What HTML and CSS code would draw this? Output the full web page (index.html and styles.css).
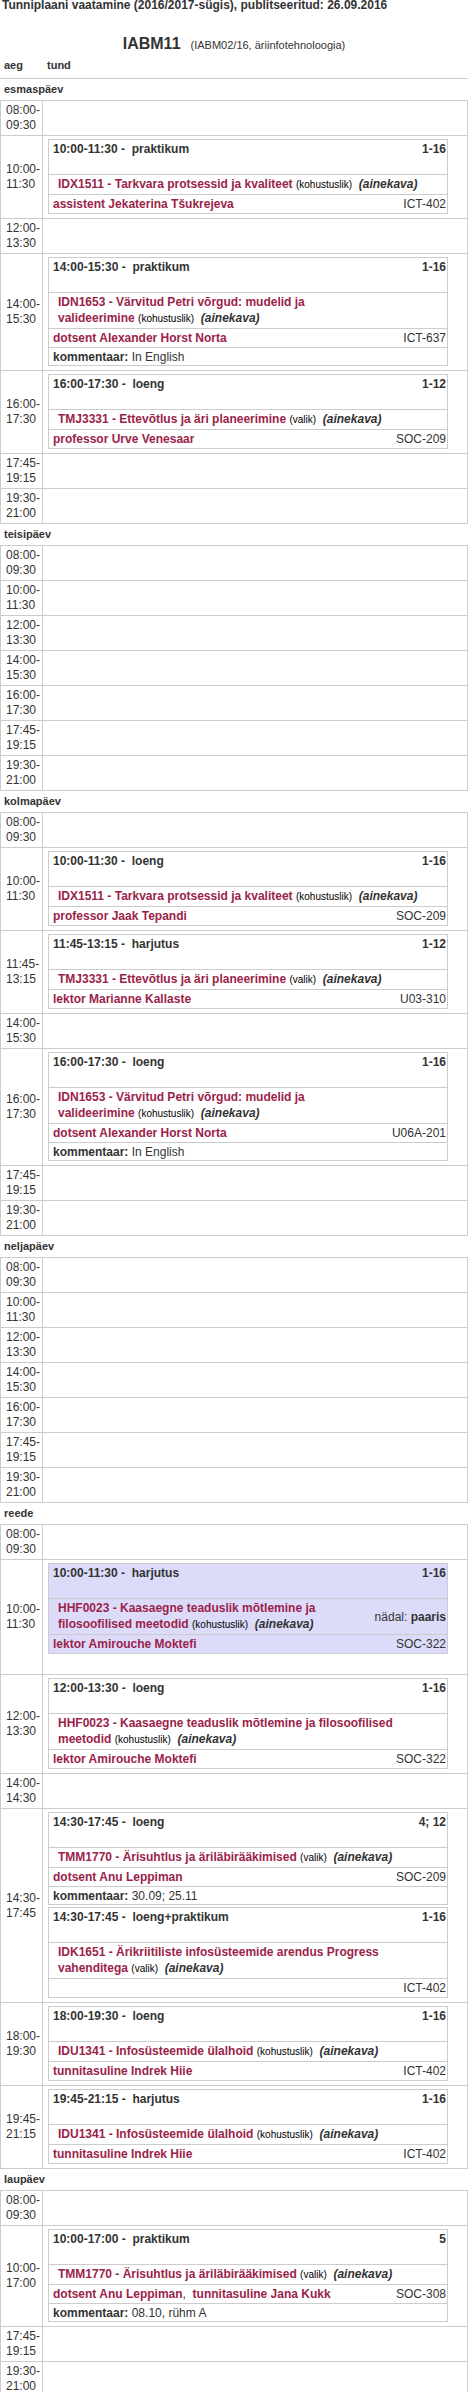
FILE: index.html
```html
<!DOCTYPE html>
<html lang="et">
<head>
<meta charset="utf-8">
<title>Tunniplaan IABM11</title>
<link rel="stylesheet" href="styles.css">
</head>
<body>
<h1 class="page-title">Tunniplaani vaatamine (2016/2017-sügis), publitseeritud: 26.09.2016</h1>
<h2 class="group"><span class="group-code">IABM11</span><span class="group-sub">(IABM02/16, äriinfotehnoloogia)</span></h2>
<div class="thead"><span class="th-time">aeg</span><span>tund</span></div>

<h3 class="day-name">esmaspäev</h3>
<div class="day">
  <div class="slot"><div class="time"><span>08:00-<br>09:30</span></div><div class="lessons"></div></div>
  <div class="slot"><div class="time"><span>10:00-<br>11:30</span></div><div class="lessons">
    <div class="card">
      <div class="row head"><span>10:00-11:30 -&nbsp; praktikum</span><span>1-16</span></div>
      <div class="row course"><div class="cwrap"><span class="cname">IDX1511 - Tarkvara protsessid ja <span class="tail">kvaliteet&nbsp;<span class="kind">(kohustuslik)</span>&nbsp;&nbsp;<span class="plan">(ainekava)</span></span></span></div></div>
      <div class="row teacher"><span class="person">assistent Jekaterina Tšukrejeva</span><span class="room">ICT-402</span></div>
    </div>
  </div></div>
  <div class="slot"><div class="time"><span>12:00-<br>13:30</span></div><div class="lessons"></div></div>
  <div class="slot"><div class="time"><span>14:00-<br>15:30</span></div><div class="lessons">
    <div class="card">
      <div class="row head"><span>14:00-15:30 -&nbsp; praktikum</span><span>1-16</span></div>
      <div class="row course"><div class="cwrap"><span class="cname">IDN1653 - Värvitud Petri võrgud: mudelid ja <span class="tail">valideerimine&nbsp;<span class="kind">(kohustuslik)</span>&nbsp;&nbsp;<span class="plan">(ainekava)</span></span></span></div></div>
      <div class="row teacher"><span class="person">dotsent Alexander Horst Norta</span><span class="room">ICT-637</span></div>
      <div class="row comment"><span><b>kommentaar:</b> In English</span></div>
    </div>
  </div></div>
  <div class="slot"><div class="time"><span>16:00-<br>17:30</span></div><div class="lessons">
    <div class="card">
      <div class="row head"><span>16:00-17:30 -&nbsp; loeng</span><span>1-12</span></div>
      <div class="row course"><div class="cwrap"><span class="cname">TMJ3331 - Ettevõtlus ja äri <span class="tail">planeerimine&nbsp;<span class="kind">(valik)</span>&nbsp;&nbsp;<span class="plan">(ainekava)</span></span></span></div></div>
      <div class="row teacher"><span class="person">professor Urve Venesaar</span><span class="room">SOC-209</span></div>
    </div>
  </div></div>
  <div class="slot"><div class="time"><span>17:45-<br>19:15</span></div><div class="lessons"></div></div>
  <div class="slot"><div class="time"><span>19:30-<br>21:00</span></div><div class="lessons"></div></div>
</div>

<h3 class="day-name">teisipäev</h3>
<div class="day">
  <div class="slot"><div class="time"><span>08:00-<br>09:30</span></div><div class="lessons"></div></div>
  <div class="slot"><div class="time"><span>10:00-<br>11:30</span></div><div class="lessons"></div></div>
  <div class="slot"><div class="time"><span>12:00-<br>13:30</span></div><div class="lessons"></div></div>
  <div class="slot"><div class="time"><span>14:00-<br>15:30</span></div><div class="lessons"></div></div>
  <div class="slot"><div class="time"><span>16:00-<br>17:30</span></div><div class="lessons"></div></div>
  <div class="slot"><div class="time"><span>17:45-<br>19:15</span></div><div class="lessons"></div></div>
  <div class="slot"><div class="time"><span>19:30-<br>21:00</span></div><div class="lessons"></div></div>
</div>

<h3 class="day-name">kolmapäev</h3>
<div class="day">
  <div class="slot"><div class="time"><span>08:00-<br>09:30</span></div><div class="lessons"></div></div>
  <div class="slot"><div class="time"><span>10:00-<br>11:30</span></div><div class="lessons">
    <div class="card">
      <div class="row head"><span>10:00-11:30 -&nbsp; loeng</span><span>1-16</span></div>
      <div class="row course"><div class="cwrap"><span class="cname">IDX1511 - Tarkvara protsessid ja <span class="tail">kvaliteet&nbsp;<span class="kind">(kohustuslik)</span>&nbsp;&nbsp;<span class="plan">(ainekava)</span></span></span></div></div>
      <div class="row teacher"><span class="person">professor Jaak Tepandi</span><span class="room">SOC-209</span></div>
    </div>
  </div></div>
  <div class="slot"><div class="time"><span>11:45-<br>13:15</span></div><div class="lessons">
    <div class="card">
      <div class="row head"><span>11:45-13:15 -&nbsp; harjutus</span><span>1-12</span></div>
      <div class="row course"><div class="cwrap"><span class="cname">TMJ3331 - Ettevõtlus ja äri <span class="tail">planeerimine&nbsp;<span class="kind">(valik)</span>&nbsp;&nbsp;<span class="plan">(ainekava)</span></span></span></div></div>
      <div class="row teacher"><span class="person">lektor Marianne Kallaste</span><span class="room">U03-310</span></div>
    </div>
  </div></div>
  <div class="slot"><div class="time"><span>14:00-<br>15:30</span></div><div class="lessons"></div></div>
  <div class="slot"><div class="time"><span>16:00-<br>17:30</span></div><div class="lessons">
    <div class="card">
      <div class="row head"><span>16:00-17:30 -&nbsp; loeng</span><span>1-16</span></div>
      <div class="row course"><div class="cwrap"><span class="cname">IDN1653 - Värvitud Petri võrgud: mudelid ja <span class="tail">valideerimine&nbsp;<span class="kind">(kohustuslik)</span>&nbsp;&nbsp;<span class="plan">(ainekava)</span></span></span></div></div>
      <div class="row teacher"><span class="person">dotsent Alexander Horst Norta</span><span class="room">U06A-201</span></div>
      <div class="row comment"><span><b>kommentaar:</b> In English</span></div>
    </div>
  </div></div>
  <div class="slot"><div class="time"><span>17:45-<br>19:15</span></div><div class="lessons"></div></div>
  <div class="slot"><div class="time"><span>19:30-<br>21:00</span></div><div class="lessons"></div></div>
</div>

<h3 class="day-name">neljapäev</h3>
<div class="day">
  <div class="slot"><div class="time"><span>08:00-<br>09:30</span></div><div class="lessons"></div></div>
  <div class="slot"><div class="time"><span>10:00-<br>11:30</span></div><div class="lessons"></div></div>
  <div class="slot"><div class="time"><span>12:00-<br>13:30</span></div><div class="lessons"></div></div>
  <div class="slot"><div class="time"><span>14:00-<br>15:30</span></div><div class="lessons"></div></div>
  <div class="slot"><div class="time"><span>16:00-<br>17:30</span></div><div class="lessons"></div></div>
  <div class="slot"><div class="time"><span>17:45-<br>19:15</span></div><div class="lessons"></div></div>
  <div class="slot"><div class="time"><span>19:30-<br>21:00</span></div><div class="lessons"></div></div>
</div>

<h3 class="day-name">reede</h3>
<div class="day">
  <div class="slot"><div class="time"><span>08:00-<br>09:30</span></div><div class="lessons"></div></div>
  <div class="slot"><div class="time"><span>10:00-<br>11:30</span></div><div class="lessons">
    <div class="card alt">
      <div class="row head"><span>10:00-11:30 -&nbsp; harjutus</span><span>1-16</span></div>
      <div class="row course"><div class="cwrap"><span class="cname">HHF0023 - Kaasaegne teaduslik mõtlemine ja <span class="tail">filosoofilised meetodid&nbsp;<span class="kind">(kohustuslik)</span>&nbsp;&nbsp;<span class="plan">(ainekava)</span></span></span></div><div class="week">nädal: <b>paaris</b></div></div>
      <div class="row teacher"><span class="person">lektor Amirouche Moktefi</span><span class="room">SOC-322</span></div>
    </div>
  </div></div>
  <div class="slot"><div class="time"><span>12:00-<br>13:30</span></div><div class="lessons">
    <div class="card">
      <div class="row head"><span>12:00-13:30 -&nbsp; loeng</span><span>1-16</span></div>
      <div class="row course"><div class="cwrap"><span class="cname">HHF0023 - Kaasaegne teaduslik mõtlemine ja filosoofilised <span class="tail">meetodid&nbsp;<span class="kind">(kohustuslik)</span>&nbsp;&nbsp;<span class="plan">(ainekava)</span></span></span></div></div>
      <div class="row teacher"><span class="person">lektor Amirouche Moktefi</span><span class="room">SOC-322</span></div>
    </div>
  </div></div>
  <div class="slot"><div class="time"><span>14:00-<br>14:30</span></div><div class="lessons"></div></div>
  <div class="slot"><div class="time"><span>14:30-<br>17:45</span></div><div class="lessons">
    <div class="card">
      <div class="row head"><span>14:30-17:45 -&nbsp; loeng</span><span>4; 12</span></div>
      <div class="row course"><div class="cwrap"><span class="cname">TMM1770 - Ärisuhtlus ja <span class="tail">äriläbirääkimised&nbsp;<span class="kind">(valik)</span>&nbsp;&nbsp;<span class="plan">(ainekava)</span></span></span></div></div>
      <div class="row teacher"><span class="person">dotsent Anu Leppiman</span><span class="room">SOC-209</span></div>
      <div class="row comment"><span><b>kommentaar:</b> 30.09; 25.11</span></div>
    </div>
    <div class="card">
      <div class="row head"><span>14:30-17:45 -&nbsp; loeng+praktikum</span><span>1-16</span></div>
      <div class="row course"><div class="cwrap"><span class="cname">IDK1651 - Ärikriitiliste infosüsteemide arendus Progress <span class="tail">vahenditega&nbsp;<span class="kind">(valik)</span>&nbsp;&nbsp;<span class="plan">(ainekava)</span></span></span></div></div>
      <div class="row teacher"><span class="person"></span><span class="room">ICT-402</span></div>
    </div>
  </div></div>
  <div class="slot"><div class="time"><span>18:00-<br>19:30</span></div><div class="lessons">
    <div class="card">
      <div class="row head"><span>18:00-19:30 -&nbsp; loeng</span><span>1-16</span></div>
      <div class="row course"><div class="cwrap"><span class="cname">IDU1341 - Infosüsteemide <span class="tail">ülalhoid&nbsp;<span class="kind">(kohustuslik)</span>&nbsp;&nbsp;<span class="plan">(ainekava)</span></span></span></div></div>
      <div class="row teacher"><span class="person">tunnitasuline Indrek Hiie</span><span class="room">ICT-402</span></div>
    </div>
  </div></div>
  <div class="slot"><div class="time"><span>19:45-<br>21:15</span></div><div class="lessons">
    <div class="card">
      <div class="row head"><span>19:45-21:15 -&nbsp; harjutus</span><span>1-16</span></div>
      <div class="row course"><div class="cwrap"><span class="cname">IDU1341 - Infosüsteemide <span class="tail">ülalhoid&nbsp;<span class="kind">(kohustuslik)</span>&nbsp;&nbsp;<span class="plan">(ainekava)</span></span></span></div></div>
      <div class="row teacher"><span class="person">tunnitasuline Indrek Hiie</span><span class="room">ICT-402</span></div>
    </div>
  </div></div>
</div>

<h3 class="day-name">laupäev</h3>
<div class="day">
  <div class="slot"><div class="time"><span>08:00-<br>09:30</span></div><div class="lessons"></div></div>
  <div class="slot"><div class="time"><span>10:00-<br>17:00</span></div><div class="lessons">
    <div class="card">
      <div class="row head"><span>10:00-17:00 -&nbsp; praktikum</span><span>5</span></div>
      <div class="row course"><div class="cwrap"><span class="cname">TMM1770 - Ärisuhtlus ja <span class="tail">äriläbirääkimised&nbsp;<span class="kind">(valik)</span>&nbsp;&nbsp;<span class="plan">(ainekava)</span></span></span></div></div>
      <div class="row teacher"><span><span class="person">dotsent Anu Leppiman</span>,&nbsp; <span class="person">tunnitasuline Jana Kukk</span></span><span class="room">SOC-308</span></div>
      <div class="row comment"><span><b>kommentaar:</b> 08.10, rühm A</span></div>
    </div>
  </div></div>
  <div class="slot"><div class="time"><span>17:45-<br>19:15</span></div><div class="lessons"></div></div>
  <div class="slot"><div class="time"><span>19:30-<br>21:00</span></div><div class="lessons"></div></div>
</div>
</body>
</html>
```

FILE: styles.css
```css
html, body {
  margin: 0;
  padding: 0;
  background: #fff;
}

body {
  font-family: "Liberation Sans", Arial, Helvetica, sans-serif;
  font-size: 12px;
  color: #333;
}

.page-title {
  margin: 0;
  padding-left: 2px;
  font-size: 12px;
  font-weight: bold;
  line-height: 11px;
}

.group {
  margin: 23px 0 0;
  text-align: center;
  font-size: 16px;
  font-weight: bold;
  line-height: 20px;
}

.group-sub {
  margin-left: 10px;
  font-size: 11px;
  font-weight: normal;
}

.thead {
  display: flex;
  padding: 3px 0 6px 4px;
  font-size: 11px;
  font-weight: bold;
  line-height: 14px;
  border-bottom: 1px solid #ccc;
}

.th-time {
  width: 43px;
}

.day-name {
  margin: 0;
  padding: 3px 0 4px 4px;
  font-size: 11px;
  font-weight: bold;
  line-height: 14px;
}

.day {
  border: 1px solid #ccc;
}

.slot {
  display: flex;
  min-height: 34px;
}

.slot + .slot {
  border-top: 1px solid #ccc;
}

.time {
  flex: none;
  width: 36px;
  padding-left: 5px;
  border-right: 1px solid #ccc;
  display: flex;
  align-items: center;
  font-size: 12px;
  line-height: 15px;
}

.lessons {
  flex: 1;
  padding: 3px 0 4px 5px;
}

.card {
  width: 400px;
  box-sizing: border-box;
  border: 1px solid #ccc;
}

.card + .card {
  margin-top: 2px;
}

.card.alt {
  background: #dcdcfa;
  margin-bottom: 16px;
}

.row {
  display: flex;
  justify-content: space-between;
  align-items: flex-start;
  padding: 1px 1px 1px 4px;
  line-height: 16px;
}

.row + .row {
  border-top: 1px solid #ccc;
}

.head {
  min-height: 32px;
  font-weight: bold;
}

.course {
  padding-left: 9px;
  align-items: center;
}

.cwrap {
  flex: 1 1 auto;
  min-width: 0;
}

.cname,
.person {
  color: #9b2349;
  font-weight: bold;
}

.tail {
  display: inline-block;
  white-space: nowrap;
}

.kind {
  font-size: 10px;
  font-weight: normal;
  color: #000;
}

.plan {
  font-weight: bold;
  font-style: italic;
  color: #333;
}

.week {
  flex: none;
}

.room {
  flex: none;
}

.comment {
  padding-bottom: 0;
}
```
